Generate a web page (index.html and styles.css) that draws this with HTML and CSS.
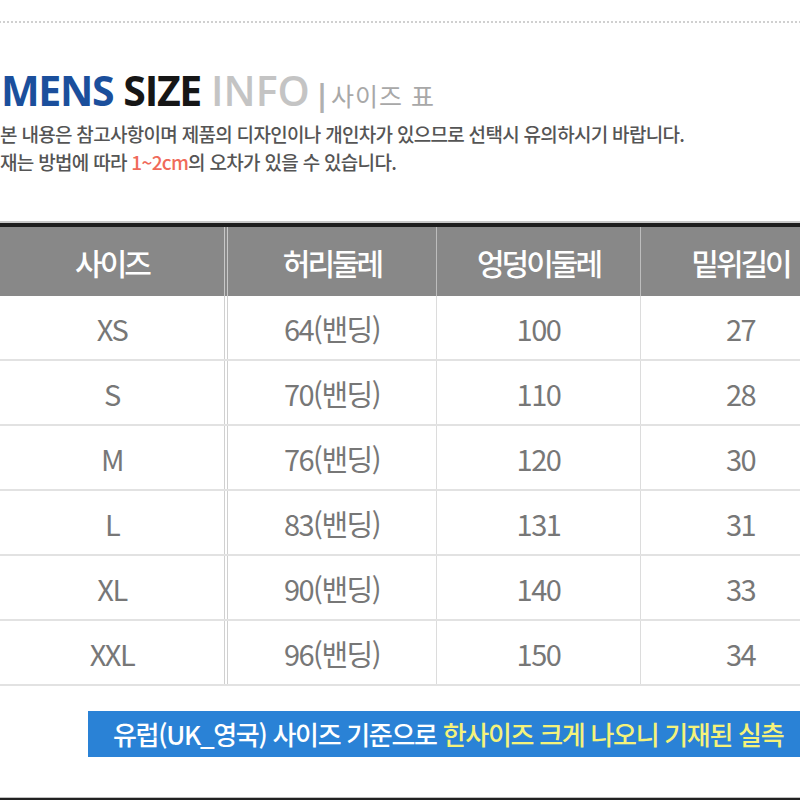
FILE: index.html
```html
<!DOCTYPE html>
<html lang="ko">
<head>
<meta charset="utf-8">
<link rel="stylesheet" href="styles.css">
</head>
<body>
<div class="page">
  <div class="dots"></div>
  <h1 class="title"><span class="t-mens">MENS</span> <span class="t-size">SIZE</span> <span class="t-info">INFO</span><span class="t-bar">|</span><span class="t-ko">사이즈 표</span></h1>
  <p class="note">본 내용은 참고사항이며 제품의 디자인이나 개인차가 있으므로 선택시 유의하시기 바랍니다.</p>
  <p class="note">재는 방법에 따라 <span class="red">1~2cm</span>의 오차가 있을 수 있습니다.</p>
  <div class="table">
    <div class="row head">
      <div class="cell c1">사이즈</div><div class="cell c2">허리둘레</div><div class="cell c3">엉덩이둘레</div><div class="cell c4">밑위길이</div>
    </div>
    <div class="row"><div class="cell c1">XS</div><div class="cell c2">64(밴딩)</div><div class="cell c3">100</div><div class="cell c4">27</div></div>
    <div class="row"><div class="cell c1">S</div><div class="cell c2">70(밴딩)</div><div class="cell c3">110</div><div class="cell c4">28</div></div>
    <div class="row"><div class="cell c1">M</div><div class="cell c2">76(밴딩)</div><div class="cell c3">120</div><div class="cell c4">30</div></div>
    <div class="row"><div class="cell c1">L</div><div class="cell c2">83(밴딩)</div><div class="cell c3">131</div><div class="cell c4">31</div></div>
    <div class="row"><div class="cell c1">XL</div><div class="cell c2">90(밴딩)</div><div class="cell c3">140</div><div class="cell c4">33</div></div>
    <div class="row"><div class="cell c1">XXL</div><div class="cell c2">96(밴딩)</div><div class="cell c3">150</div><div class="cell c4">34</div></div>
  </div>
  <div class="banner">유럽(UK_영국) 사이즈 기준으로 <span class="yellow">한사이즈 크게 나오니 기재된 실측</span></div>
  <div class="bottom-line"></div>
</div>
</body>
</html>
```

FILE: styles.css
```css
* { box-sizing: border-box; margin: 0; padding: 0; }
html, body { width: 800px; height: 800px; overflow: hidden; background: #fff; }
body { font-family: "Noto Sans CJK KR", "Noto Sans", sans-serif; }
.page { width: 800px; height: 800px; overflow: hidden; padding-top: 21px; }
.dots { height: 3px; margin: 0 -4px; border-top: 2px dotted #d0d0d0; }
.title {
  margin-top: 38px;
  height: 50px;
  display: flex;
  align-items: baseline;
  font-family: "Open Sans", "Noto Sans CJK KR", sans-serif;
  font-weight: 700;
  font-size: 41px;
  letter-spacing: -1.3px;
  white-space: nowrap;
  padding-left: 1px;
}
.t-mens { color: #1b4f9c; }
.t-size { color: #161616; margin-left: 10px; }
.t-info { color: #c4c4c4; margin-left: 10px; font-weight: 600; letter-spacing: 0; }
.t-bar { color: #b0b0b0; font-weight: 700; font-size: 30px; margin-left: 4px; margin-right: 2px; }
.t-ko { color: #a8a8a8; font-family: "Noto Sans CJK KR", sans-serif; font-weight: 400; font-size: 25px; letter-spacing: 1px; }
.note {
  font-size: 19px;
  font-weight: 500;
  line-height: 28px;
  color: #555;
  letter-spacing: -0.7px;
  white-space: nowrap;
}
.note:first-of-type { margin-top: 8px; }
.red { color: #f06a5a; }
.table {
  margin-top: 45px;
  width: 840px;
  border-top: 2px solid #c8c8c8;
}
.row {
  display: grid;
  grid-template-columns: 224px 212px 204px 200px;
  height: 65px;
  border-bottom: 2px solid #e2e2e2;
}
.row.head {
  height: 73px;
  background: #888;
  border-top: 4px solid #1e1e1e;
  border-bottom: none;
  color: #fff;
}
.cell {
  display: flex;
  align-items: center;
  justify-content: center;
  font-size: 29px;
  color: #777;
  letter-spacing: -1.5px;
  border-left: 1px solid #dcdcdc;
}
.head .cell { color: #fff; font-size: 30px; font-weight: 500; letter-spacing: -3px; border-left: 1px solid #bdbdbd; }
.cell.c1 { border-left: none; }
.cell.c2 { border-left: 4px double #d0d0d0; }
.head .cell.c2 { border-left: 4px double #c8c8c8; }
.banner {
  margin-top: 25px;
  margin-left: 88px;
  width: 712px;
  height: 46px;
  background: #2a82d6;
  color: #fff;
  font-size: 26px;
  font-weight: 500;
  line-height: 46px;
  padding-left: 25px;
  white-space: nowrap;
  letter-spacing: -1.3px;
}
.yellow { color: #f4f27a; }
.bottom-line {
  margin-top: 40px;
  height: 4px;
  border-top: 1px solid #c0c0c0;
  background: #222;
}
```
